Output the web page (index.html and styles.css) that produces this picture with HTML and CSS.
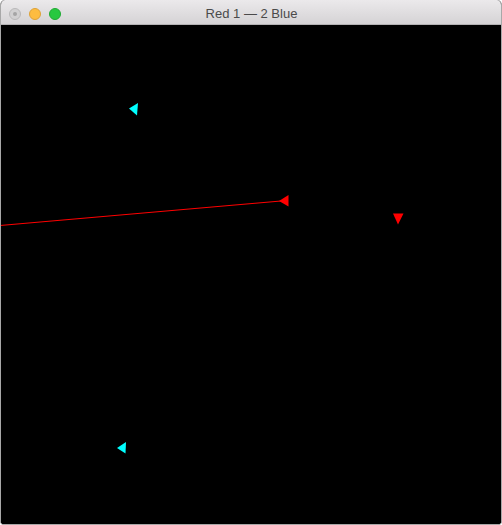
FILE: index.html
```html
<!DOCTYPE html>
<html>
<head>
<meta charset="utf-8">
<link rel="stylesheet" href="styles.css">
</head>
<body>
<div class="window">
  <div class="titlebar">
    <div class="lights">
      <span class="light close"></span>
      <span class="light min"></span>
      <span class="light max"></span>
    </div>
    <div class="title">Red 1 — 2 Blue</div>
  </div>
  <div class="canvas">
    <svg class="scene" width="500" height="499" viewBox="1 25 500 499">
      <rect x="1" y="25" width="500" height="499" fill="#000"/>
      <line x1="0" y1="225.5" x2="281" y2="201" stroke="#ff0000" stroke-width="1"/>
      <polygon points="138,103 129,108.5 137,115.5" fill="#00ffff"/>
      <polygon points="288.5,195 279,201 288.5,206.5" fill="#ff0000"/>
      <polygon points="393,213.5 403.5,213.5 398,224.5" fill="#ff0000"/>
      <polygon points="126,442 117,448 125.5,453.5" fill="#00ffff"/>
    </svg>
  </div>
</div>
</body>
</html>
```

FILE: styles.css
```css
html, body {
  margin: 0;
  padding: 0;
  background: #ffffff;
}
.window {
  width: 502px;
  height: 525px;
  box-sizing: border-box;
  border: 1px solid #a8a8a8;
  border-top: none;
  border-radius: 5px 5px 4px 4px;
  overflow: hidden;
  display: flex;
  flex-direction: column;
  background: #000;
}
.titlebar {
  height: 24px;
  flex: 0 0 24px;
  background: linear-gradient(#ebe9eb, #d5d3d5);
  border-bottom: 1px solid #b4b2b4;
  position: relative;
  display: flex;
  align-items: center;
  justify-content: center;
  margin: 0 -1px;
}
.lights {
  position: absolute;
  left: 9px;
  top: 8px;
  display: flex;
  gap: 8px;
}
.light {
  width: 12px;
  height: 12px;
  border-radius: 50%;
  box-sizing: border-box;
  display: block;
}
.light.close {
  background: #d1d0d1;
  border: 1px solid #b9b8b9;
  position: relative;
}
.light.close::after {
  content: "";
  position: absolute;
  left: 3px;
  top: 3px;
  width: 4px;
  height: 4px;
  border-radius: 50%;
  background: #a5a4a5;
}
.light.min {
  background: #fdbc40;
  border: 1px solid #dea236;
}
.light.max {
  background: #27c840;
  border: 1px solid #1eab32;
}
.title {
  font-family: "Liberation Sans", Arial, sans-serif;
  font-size: 13px;
  color: #4a4a4a;
  line-height: 24px;
  padding-left: 1px;
  padding-top: 4px;
}
.canvas {
  flex: 1;
  background: #000;
}
.scene {
  display: block;
}
```
